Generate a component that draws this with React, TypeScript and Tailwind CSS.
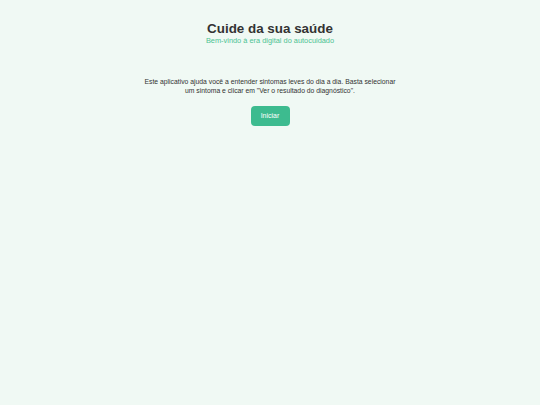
export default function App() {
  return (
    <div className="min-h-[405px] w-full bg-[#f0f9f4] flex flex-col items-center pt-[21px]" style={{ fontFamily: '"Liberation Sans", Arial, sans-serif' }}>
      <h1 className="text-[13.4px] leading-[16px] font-bold text-[#333333]">Cuide da sua saúde</h1>
      <p className="text-[7.4px] leading-[8px] text-[#4cc292]">Bem-vindo à era digital do autocuidado</p>
      <p className="mt-[33px] w-[256px] text-center text-[6.8px] leading-[8.5px] text-[#333333]">
        Este aplicativo ajuda você a entender sintomas leves do dia a dia. Basta selecionar um sintoma e clicar em "Ver o resultado do diagnóstico".
      </p>
      <button className="mt-[11px] w-[39px] h-[20px] rounded-[4px] bg-[#3dbb8f] text-white text-[7px] leading-[20px]">Iniciar</button>
    </div>
  );
}
